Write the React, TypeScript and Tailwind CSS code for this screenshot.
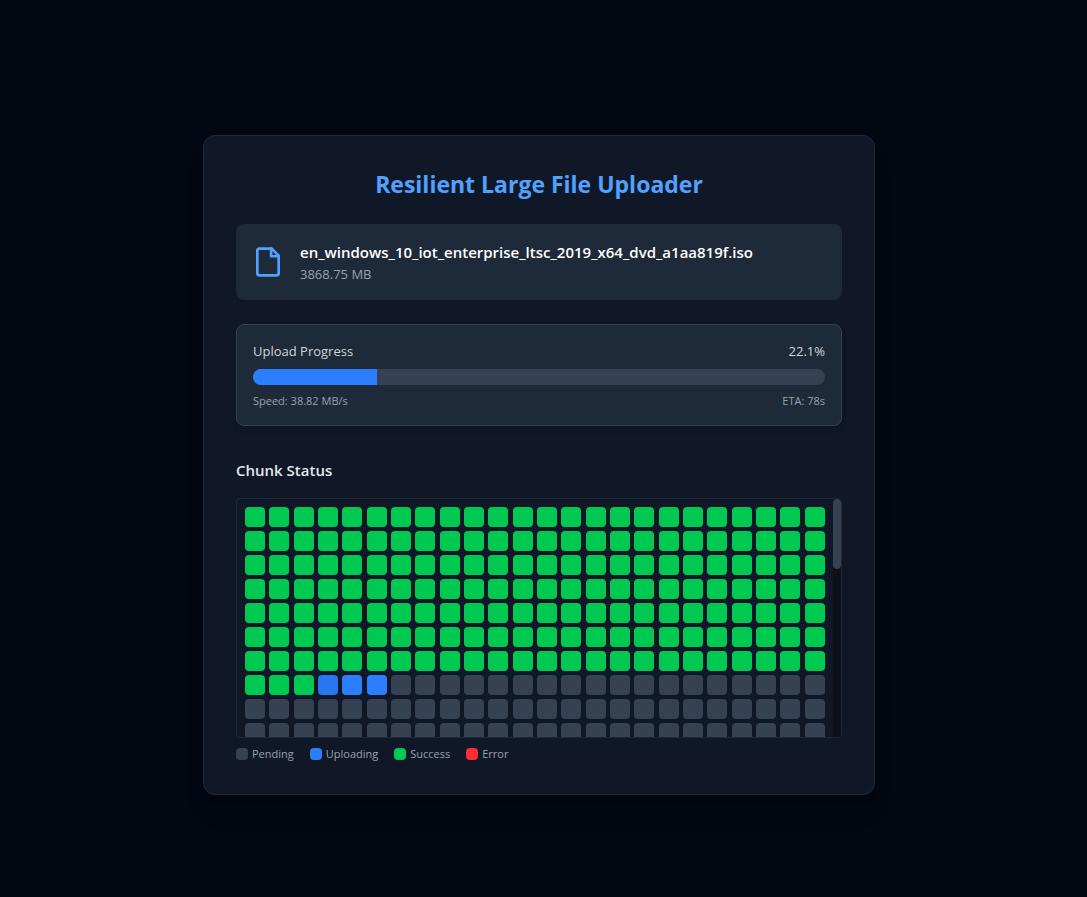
import React, { useState } from 'react'
import clsx from 'clsx'

type ChunkStatus = 'pending' | 'uploading' | 'success' | 'error'

interface FileInfo {
    name: string
    sizeMb: number
}

const CHUNK_SIZE_MB = 5

const file: FileInfo = {
    name: 'en_windows_10_iot_enterprise_ltsc_2019_x64_dvd_a1aa819f.iso',
    sizeMb: 3868.75
}

const uploadedChunks = 171
const activeChunks = 3
const totalChunks = Math.ceil( file.sizeMb / CHUNK_SIZE_MB )

// the bar trails the counter by one batch of chunks
const barPercent = ( ( uploadedChunks - activeChunks ) / totalChunks ) * 100

const statusColor: Record<ChunkStatus, string> = {
    pending: 'bg-gray-700',
    uploading: 'bg-blue-500',
    success: 'bg-green-500',
    error: 'bg-red-500'
}

const legend: { status: ChunkStatus, label: string }[] = [
    { status: 'pending', label: 'Pending' },
    { status: 'uploading', label: 'Uploading' },
    { status: 'success', label: 'Success' },
    { status: 'error', label: 'Error' }
]

const chunks: ChunkStatus[] = Array.from({ length: totalChunks }, ( _, i ) => {
    if ( i < uploadedChunks ) return 'success'
    if ( i < uploadedChunks + activeChunks ) return 'uploading'
    return 'pending'
})

const FileCard = () => (
    <div className="flex items-center gap-4 rounded-lg bg-gray-800 p-4">
        <svg
            className="size-8 shrink-0 text-blue-400"
            viewBox="0 0 24 24"
            fill="none"
            stroke="currentColor"
            strokeWidth="2"
            strokeLinecap="round"
            strokeLinejoin="round"
            aria-hidden="true"
        >
            <path d="M14.8 2H5.3A1.3 1.3 0 0 0 4 3.3v17.4A1.3 1.3 0 0 0 5.3 22h13.4a1.3 1.3 0 0 0 1.3-1.3V7.2z" />
            <path d="M14.3 2v5.7H20" />
        </svg>
        <div className="min-w-0">
            <p className="truncate text-[15px]/6 font-semibold text-white">{ file.name }</p>
            <p className="text-[13px]/5 text-gray-400">{ file.sizeMb } MB</p>
        </div>
    </div>
)

const UploadProgress = () => {

    const percent = ( uploadedChunks / totalChunks ) * 100

    return (
        <div className="rounded-lg border border-gray-700 bg-gray-800 p-4 shadow-md">
            <div className="mb-2 flex justify-between text-[13px]/5 text-gray-300">
                <span id="progress-label">Upload Progress</span>
                <span>{ percent.toFixed(1) }%</span>
            </div>
            <div
                role="progressbar"
                aria-labelledby="progress-label"
                aria-valuenow={ Math.round( percent ) }
                className="h-4 overflow-hidden rounded-full bg-gray-700"
            >
                <div className="h-full bg-blue-500" style={{ width: `${ barPercent }%` }} />
            </div>
            <div className="mt-2 flex justify-between text-[11px]/4 text-gray-400">
                <span>Speed: 38.82 MB/s</span>
                <span>ETA: 78s</span>
            </div>
        </div>
    )
}

const ChunkGrid = () => {

    const [ scrolled, setScrolled ] = useState(0)

    const handleScroll = ( e: React.UIEvent<HTMLDivElement> ) => {
        const { scrollTop, scrollHeight } = e.currentTarget
        setScrolled( ( scrollTop / scrollHeight ) * 100 )
    }

    return (
        <section>
            <h2 className="mb-4 text-[15px]/6 font-semibold text-gray-200">Chunk Status</h2>
            <div className="flex h-60 overflow-hidden rounded border border-gray-800">
                <div
                    className="flex-1 overflow-y-auto p-2 [scrollbar-width:none]"
                    onScroll={ handleScroll }
                >
                    <div className="grid grid-cols-24 gap-1">
                        {
                            chunks.map( ( status, i ) => (
                                <div
                                    key={ i }
                                    className={ clsx(
                                        'size-5 rounded',
                                        statusColor[status],
                                        i === uploadedChunks && 'opacity-90'
                                    )}
                                />
                            ))
                        }
                    </div>
                </div>
                <div className="w-2 bg-[#0d1117]">
                    <div style={{ height: `${ scrolled }%` }} />
                    <div className="h-[70px] rounded-full bg-gray-700" />
                </div>
            </div>
            <ul className="mt-2 flex gap-4 text-[11px]/4 text-gray-400">
                {
                    legend.map( ({ status, label }) => (
                        <li key={ status } className="flex items-center gap-1">
                            <span className={ clsx( 'size-3 rounded', statusColor[status] ) } />
                            { label }
                        </li>
                    ))
                }
            </ul>
        </section>
    )
}

export default function App() {
    return (
        <main className="flex min-h-screen items-center justify-center bg-gray-950 pt-8 pr-[25px] pl-4 font-['Open_Sans','Noto_Sans',sans-serif]">
            <div className="w-full max-w-2xl rounded-xl border border-gray-800 bg-gray-900 p-8 shadow-xl">
                <h1 className="mb-6 text-center text-[23px]/8 font-bold text-blue-400">Resilient Large File Uploader</h1>
                <div className="mb-6">
                    <FileCard />
                </div>
                <div className="mb-8">
                    <UploadProgress />
                </div>
                <ChunkGrid />
            </div>
        </main>
    )
}
